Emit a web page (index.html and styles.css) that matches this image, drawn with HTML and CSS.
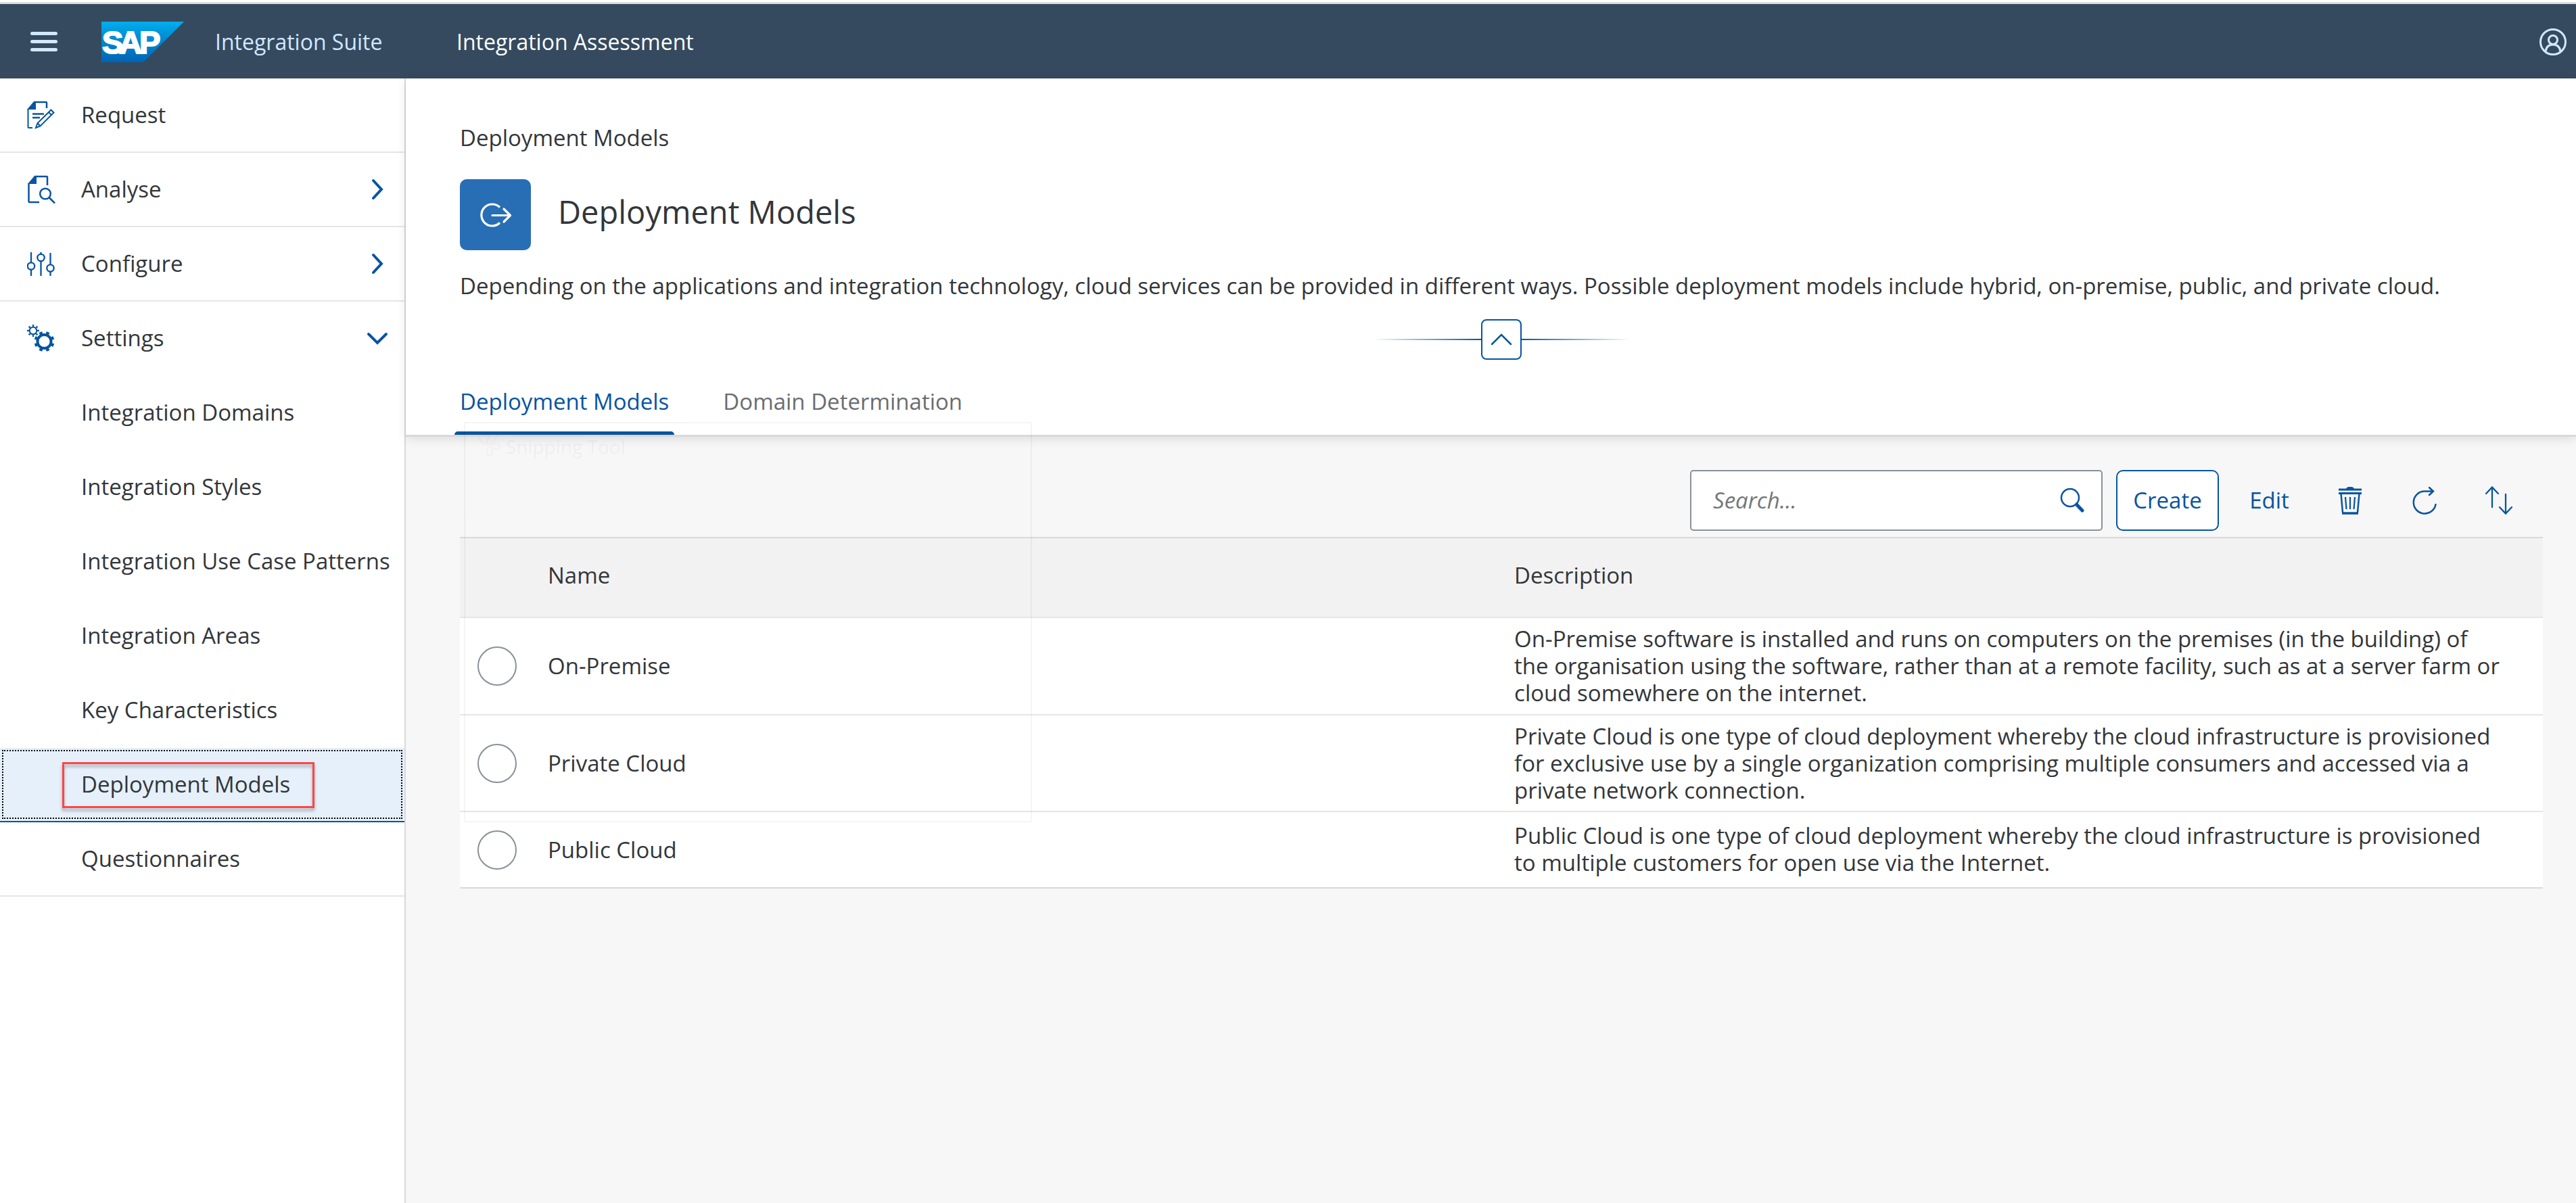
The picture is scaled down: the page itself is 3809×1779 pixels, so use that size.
FILE: index.html
```html
<!DOCTYPE html>
<html lang="en">
<head>
<meta charset="utf-8">
<meta name="viewport" content="width=device-width, initial-scale=1">
<title>Deployment Models - Integration Assessment</title>
<link rel="stylesheet" href="styles.css">
</head>
<body>
<header class="shell">
  <button class="shell-menu" type="button" aria-label="Toggle navigation">
    <svg width="40" height="30" viewBox="0 0 40 30"><path d="M2.500 2.500h35M2.500 14.500h35M2.500 26.500h35" stroke="#d1e8ff" stroke-width="5" stroke-linecap="round"/></svg>
  </button>
  <a class="shell-logo" href="#home" aria-label="SAP home">
    <svg width="122" height="60" viewBox="0 0 122 60">
      <defs><linearGradient id="logo-fill" x1="0" y1="0" x2="0" y2="1"><stop offset="0" stop-color="#00aeef"/><stop offset=".3" stop-color="#0094da"/><stop offset="1" stop-color="#0064b4"/></linearGradient></defs>
      <path d="M0 0h122L62 60H0z" fill="url(#logo-fill)"/>
      <text class="logo-text" y="47"><tspan x="1">S</tspan><tspan x="26">A</tspan><tspan x="56">P</tspan></text>
    </svg>
  </a>
  <a class="shell-suite" href="#suite">Integration Suite</a>
  <span class="shell-app">Integration Assessment</span>
  <button class="shell-user" type="button" aria-label="User menu">
    <svg width="40" height="42" viewBox="0 0 40 42" fill="none" stroke="#d1e8ff" stroke-width="3"><circle cx="20" cy="21" r="18.500"/><circle cx="20" cy="18" r="6.500"/><path d="M9 35c1-7 5-10 11-10s10 3 11 10"/></svg>
  </button>
</header>

<div class="layout">
  <nav class="side" aria-label="Main navigation">
    <ul class="side-list">
      <li class="side-item"><a class="side-link" href="#request">
        <svg class="side-icon" viewBox="0 0 42 42" fill="none" stroke="#0854a0" stroke-width="2"><path d="M1.500 12v26.500q0 1.500 1.500 1.500h5"/><path d="M10 2h18q1 0 1 1v8" stroke-width="2.500"/><path d="M0 13L10 1h3v12z" fill="#0854a0" stroke="none"/><path d="M8 19.500h17M8 25h11" stroke-width="2.500"/><path d="M35.500 13.500l4 4-20 20-6.500 2.500 2.500-7zM19 37l-3.500-4M32 17l4 4"/></svg>
        <span class="side-text">Request</span></a></li>
      <li class="side-item"><a class="side-link" href="#analyse">
        <svg class="side-icon" viewBox="0 0 42 42" fill="none" stroke="#0854a0" stroke-width="2"><path d="M2.500 12v26.500q0 1.500 1.500 1.500h14" stroke-width="2.500"/><path d="M11 2h18q1 0 1 1v12" stroke-width="2.500"/><path d="M1 13L11 1h3v12z" fill="#0854a0" stroke="none"/><circle cx="27" cy="27.500" r="7.800" stroke-width="2.500"/><path d="M33 33.500l8 8" stroke-width="2.500"/></svg>
        <span class="side-text">Analyse</span>
        <svg class="side-chevron" viewBox="0 0 32 32"><path d="M10 3l12 13-12 13"/></svg></a></li>
      <li class="side-item"><a class="side-link" href="#configure">
        <svg class="side-icon" viewBox="0 0 42 42" fill="none" stroke="#0854a0" stroke-width="2.300"><path d="M6 4v15M6 30v9M20.500 4v3M20.500 17v22M34.500 5v17M34.500 33v6"/><circle cx="6" cy="24.500" r="5.200"/><circle cx="20.500" cy="12" r="5.200"/><circle cx="34.500" cy="27.500" r="5.200"/></svg>
        <span class="side-text">Configure</span>
        <svg class="side-chevron" viewBox="0 0 32 32"><path d="M10 3l12 13-12 13"/></svg></a></li>
      <li class="side-group">
        <a class="side-link" href="#settings">
          <svg class="side-icon" viewBox="0 0 42 42" fill="none" stroke="#0854a0"><circle cx="9" cy="10" r="5.300" stroke-width="2"/><circle cx="9" cy="10" r="7.500" stroke-width="3" pathLength="16" stroke-dasharray=".8 1.200" stroke-dashoffset=".4"/><circle cx="25.500" cy="26" r="10" stroke-width="4"/><circle cx="25.500" cy="26" r="13" stroke-width="4" pathLength="16" stroke-dasharray=".9 1.100" stroke-dashoffset="1.450"/></svg>
          <span class="side-text">Settings</span>
          <svg class="side-chevron" viewBox="0 0 32 32"><path d="M3 10l13 13 13-13"/></svg></a>
        <ul class="side-sub">
          <li><a class="side-link" href="#domains"><span class="side-text">Integration Domains</span></a></li>
          <li><a class="side-link" href="#styles"><span class="side-text">Integration Styles</span></a></li>
          <li><a class="side-link" href="#patterns"><span class="side-text">Integration Use Case Patterns</span></a></li>
          <li><a class="side-link" href="#areas"><span class="side-text">Integration Areas</span></a></li>
          <li><a class="side-link" href="#characteristics"><span class="side-text">Key Characteristics</span></a></li>
          <li class="is-selected"><a class="side-link" href="#models" aria-current="page"><span class="side-text">Deployment Models</span><span class="side-marker"></span></a></li>
          <li><a class="side-link" href="#questionnaires"><span class="side-text">Questionnaires</span></a></li>
        </ul>
      </li>
    </ul>
  </nav>

  <main class="page">
    <section class="page-head">
      <p class="crumb">Deployment Models</p>
      <div class="title-row">
        <div class="title-icon">
          <svg width="105" height="105" viewBox="0 0 105 105" fill="none" stroke="#fff" stroke-width="3.200" stroke-linecap="round" stroke-linejoin="round"><path d="M59 41.500a16 16 0 1 0 0 23" stroke-linecap="butt"/><path d="M48 53.500h26M65 44l9.500 9.500L65 63"/></svg>
        </div>
        <h1 class="title">Deployment Models</h1>
      </div>
      <p class="intro">Depending on the applications and integration technology, cloud services can be provided in different ways. Possible deployment models include hybrid, on-premise, public, and private cloud.</p>
      <div class="collapse">
        <span class="collapse-line"></span>
        <button class="collapse-button" type="button" aria-label="Collapse header">
          <svg width="32" height="18" viewBox="0 0 32 18"><path d="M2 16L16 2l14 14" fill="none" stroke="#0854a0" stroke-width="2.500" stroke-linecap="round"/></svg>
        </button>
        <span class="collapse-line collapse-line-end"></span>
      </div>
      <div class="tabs" role="tablist">
        <button class="tab is-active" type="button" role="tab" aria-selected="true">Deployment Models</button>
        <button class="tab" type="button" role="tab" aria-selected="false">Domain Determination</button>
      </div>
    </section>

    <section class="content">
      <div class="toolbar">
        <label class="search">
          <input class="search-input" type="search" placeholder="Search..." aria-label="Search">
          <svg width="36" height="40" viewBox="0 0 36 40" fill="none" stroke="#0854a0"><circle cx="15" cy="16" r="13" stroke-width="2.500"/><path d="M24.500 26l8.500 9" stroke-width="5" stroke-linecap="round"/></svg>
        </label>
        <button class="button button-create" type="button">Create</button>
        <button class="button button-edit" type="button">Edit</button>
        <button class="button button-icon" type="button" aria-label="Delete">
          <svg width="40" height="44" viewBox="0 0 40 44" fill="none" stroke="#0854a0"><path d="M14 5q1-3 4-3h4q3 0 4 3z" fill="#0854a0" stroke="none"/><path d="M3 6h34M3 11.500h34" stroke-width="3"/><path d="M6.500 12l2.500 28M33.500 12L31 40" stroke-width="2.500"/><path d="M8 41h24" stroke-width="3.500"/><path d="M13 17l1.500 18M20 17v18M27 17l-1.500 18" stroke-width="2.200"/></svg>
        </button>
        <button class="button button-icon" type="button" aria-label="Refresh">
          <svg width="40" height="44" viewBox="0 0 40 44" fill="none" stroke="#0854a0" stroke-width="2.500" stroke-linecap="round"><path d="M32 8.500H20A16.500 16.500 0 1 0 36.500 28M27 3l6 5.500-6 5.500"/></svg>
        </button>
        <button class="button button-icon" type="button" aria-label="Sort">
          <svg width="44" height="44" viewBox="0 0 44 44" fill="none" stroke="#0854a0" stroke-width="2.300" stroke-linecap="round"><path d="M12 32V3M3 12l9-9.500 9 9.500M32 13v28M23 32l9 9.500 9-9.500"/></svg>
        </button>
      </div>
      <table class="models">
        <colgroup><col class="col-select"><col class="col-name"><col></colgroup>
        <thead>
          <tr><td></td><th scope="col">Name</th><th scope="col">Description</th></tr>
        </thead>
        <tbody>
          <tr>
            <td class="select-cell"><input class="radio" type="radio" name="model" aria-label="Select On-Premise"></td>
            <td>On-Premise</td>
            <td class="text-cell">On-Premise software is installed and runs on computers on the premises (in the building) of the organisation using the software, rather than at a remote facility, such as at a server farm or cloud somewhere on the internet.</td>
          </tr>
          <tr>
            <td class="select-cell"><input class="radio" type="radio" name="model" aria-label="Select Private Cloud"></td>
            <td>Private Cloud</td>
            <td class="text-cell">Private Cloud is one type of cloud deployment whereby the cloud infrastructure is provisioned for exclusive use by a single organization comprising multiple consumers and accessed via a private network connection.</td>
          </tr>
          <tr>
            <td class="select-cell"><input class="radio" type="radio" name="model" aria-label="Select Public Cloud"></td>
            <td>Public Cloud</td>
            <td class="text-cell">Public Cloud is one type of cloud deployment whereby the cloud infrastructure is provisioned to multiple customers for open use via the Internet.</td>
          </tr>
        </tbody>
      </table>
    </section>

    <div class="ghost" aria-hidden="true">
      <svg width="36" height="38" viewBox="0 0 36 38" fill="none" stroke-width="2"><g stroke="#c44"><ellipse cx="10" cy="9" rx="5" ry="11" transform="rotate(-30 10 9)"/><ellipse cx="24" cy="9" rx="5" ry="11" transform="rotate(35 24 9)"/></g><g stroke="#28c"><ellipse cx="20" cy="29" rx="4" ry="7"/><ellipse cx="29" cy="22" rx="6" ry="4"/></g></svg>
      <span>Snipping Tool</span>
    </div>
  </main>
</div>
</body>
</html>
```
FILE: styles.css
```css
:root {
  --brand: #0854a0;
  --text: #32363a;
  --muted: #6a6d70;
  --line: #e5e5e5;
  --line-strong: #d9d9d9;
}

* { box-sizing: border-box; }

body {
  margin: 0;
  padding-top: 3px;
  min-height: 100vh;
  display: flex;
  flex-direction: column;
  background: #fff;
  color: var(--text);
  font: 33px/44px "Open Sans", "Noto Sans", sans-serif;
}

button, input { font: inherit; color: inherit; }
button { padding: 0; border: 0; background: none; cursor: pointer; }
a { color: inherit; text-decoration: none; }
svg { display: block; flex: none; }
ul { margin: 0; padding: 0; list-style: none; }

/* Shell bar */
.shell {
  display: flex;
  align-items: center;
  height: 113px;
  padding: 2px 14px 0 45px;
  border-top: 3px solid #dcdcdc;
  background: #354a5f;
  font-size: 32px;
}
.shell-logo { margin-left: 65px; }
.logo-text {
  font: bold 47px "Liberation Sans", Arial, sans-serif;
  fill: #fff;
  stroke: #fff;
  stroke-width: 2px;
}
.shell-suite { width: 357px; margin-left: 46px; color: #d1e8ff; }
.shell-app { flex: 1; color: #fff; }

/* Layout */
.layout { display: flex; flex: 1; }
.side {
  flex: 0 0 600px;
  border-right: 2px solid var(--line-strong);
}
.page {
  position: relative;
  flex: 1;
  min-width: 0;
  background: #f7f7f7;
}

/* Side navigation */
.side-link {
  position: relative;
  display: flex;
  align-items: center;
  height: 108px;
  padding: 0 24px 0 40px;
}
.side-icon { width: 42px; height: 42px; margin-right: 38px; }
.side-text { flex: 1; white-space: nowrap; }
.side-chevron {
  width: 32px;
  height: 32px;
  fill: none;
  stroke: var(--brand);
  stroke-width: 4px;
  stroke-linecap: round;
}
.side-item, .side-group { border-bottom: 2px solid var(--line); }
.side-sub { padding-top: 2px; }
.side-sub .side-link { padding: 0 0 0 120px; }
.side-sub li + li { border-top: 2px solid transparent; }
.side-sub .is-selected .side-link {
  background: #e5f0fa;
  outline: 2px dotted #000;
  outline-offset: -5px;
}
.side-sub .is-selected + li { border-top-color: var(--brand); }
.side-marker {
  position: absolute;
  left: 92px;
  top: 21px;
  width: 373px;
  height: 68px;
  border: 3px solid #ff4646;
  filter: drop-shadow(0 4px 2px rgba(0, 0, 0, .3));
}

/* Page header */
.page-head {
  position: relative;
  padding: 66px 49px 0 80px;
  border-bottom: 3px solid var(--line-strong);
  background: #fff;
  box-shadow: 0 4px 14px rgba(0, 0, 0, .1);
}
.crumb { margin: 0 0 39px; }
.title-row { display: flex; gap: 40px; }
.title-icon { border-radius: 10px; background: #286eb4; }
.title { margin: 0; font-size: 47px; line-height: 96px; font-weight: 400; }
.intro { margin: 31px 0 27px; }
.collapse { display: flex; justify-content: center; align-items: center; }
.collapse-line {
  width: 160px;
  height: 2px;
  background: linear-gradient(to right, transparent, var(--brand));
}
.collapse-line-end { background: linear-gradient(to left, transparent, var(--brand)); }
.collapse-button {
  display: flex;
  justify-content: center;
  align-items: center;
  width: 60px;
  height: 60px;
  border: 2px solid var(--brand);
  border-radius: 8px;
}
.tabs { display: flex; gap: 64px; margin-left: -8px; }
.tab { position: relative; padding: 40px 8px 27px; color: var(--muted); }
.tab.is-active { color: var(--brand); }
.tab.is-active::after {
  content: "";
  position: absolute;
  left: 0;
  right: 0;
  bottom: 0;
  height: 5px;
  border-radius: 5px 5px 0 0;
  background: var(--brand);
}

/* Toolbar */
.content { padding: 49px 49px 0 80px; }
.toolbar {
  display: flex;
  justify-content: flex-end;
  gap: 20px;
  padding: 0 20px 9px 0;
}
.search {
  display: flex;
  align-items: center;
  width: 610px;
  height: 90px;
  padding: 0 25px 0 32px;
  border: 2px solid #89919a;
  border-radius: 5px;
  background: #fff;
}
.search-input {
  flex: 1;
  min-width: 0;
  padding: 0;
  border: 0;
  outline: 0;
  background: none;
}
.search-input::placeholder { color: #74777a; font-style: italic; opacity: 1; }
.button {
  display: flex;
  justify-content: center;
  align-items: center;
  height: 90px;
  color: var(--brand);
}
.button-create {
  width: 152px;
  border: 2px solid var(--brand);
  border-radius: 10px;
  background: #fff;
}
.button-edit { width: 109px; }
.button-icon { width: 90px; }

/* Table */
.models {
  width: 100%;
  table-layout: fixed;
  border-collapse: separate;
  border-spacing: 0;
  border-top: 2px solid var(--line-strong);
  border-bottom: 2px solid var(--line-strong);
  background: #fff;
  line-height: 40px;
}
.col-select { width: 130px; }
.col-name { width: 46.4%; }
.models th, .models td { padding: 0; text-align: left; font-weight: 400; }
.models thead th, .models thead td {
  height: 118px;
  padding-bottom: 6px;
  border-bottom: 2px solid var(--line);
  background: #f2f2f2;
}
.models tbody tr + tr td { border-top: 2px solid var(--line); }
.models .select-cell { padding-left: 26px; }
.models .text-cell { padding: 11px 56px 11px 0; }
.models tbody tr + tr .text-cell { padding: 11px 56px 10px 0; }
.models tbody tr:last-child .text-cell { padding: 15px 56px 16px 0; }
.radio {
  display: block;
  appearance: none;
  width: 58px;
  height: 58px;
  margin: 0;
  border: 2px solid #89919a;
  border-radius: 50%;
  background: #fff;
}

/* Nearly faded-out window that floats over the page */
.ghost {
  position: absolute;
  left: 86px;
  top: 508px;
  display: flex;
  gap: 8px;
  width: 840px;
  height: 592px;
  padding: 12px 16px;
  border: 2px solid #000;
  opacity: .04;
  font-size: 28px;
  pointer-events: none;
}
```
